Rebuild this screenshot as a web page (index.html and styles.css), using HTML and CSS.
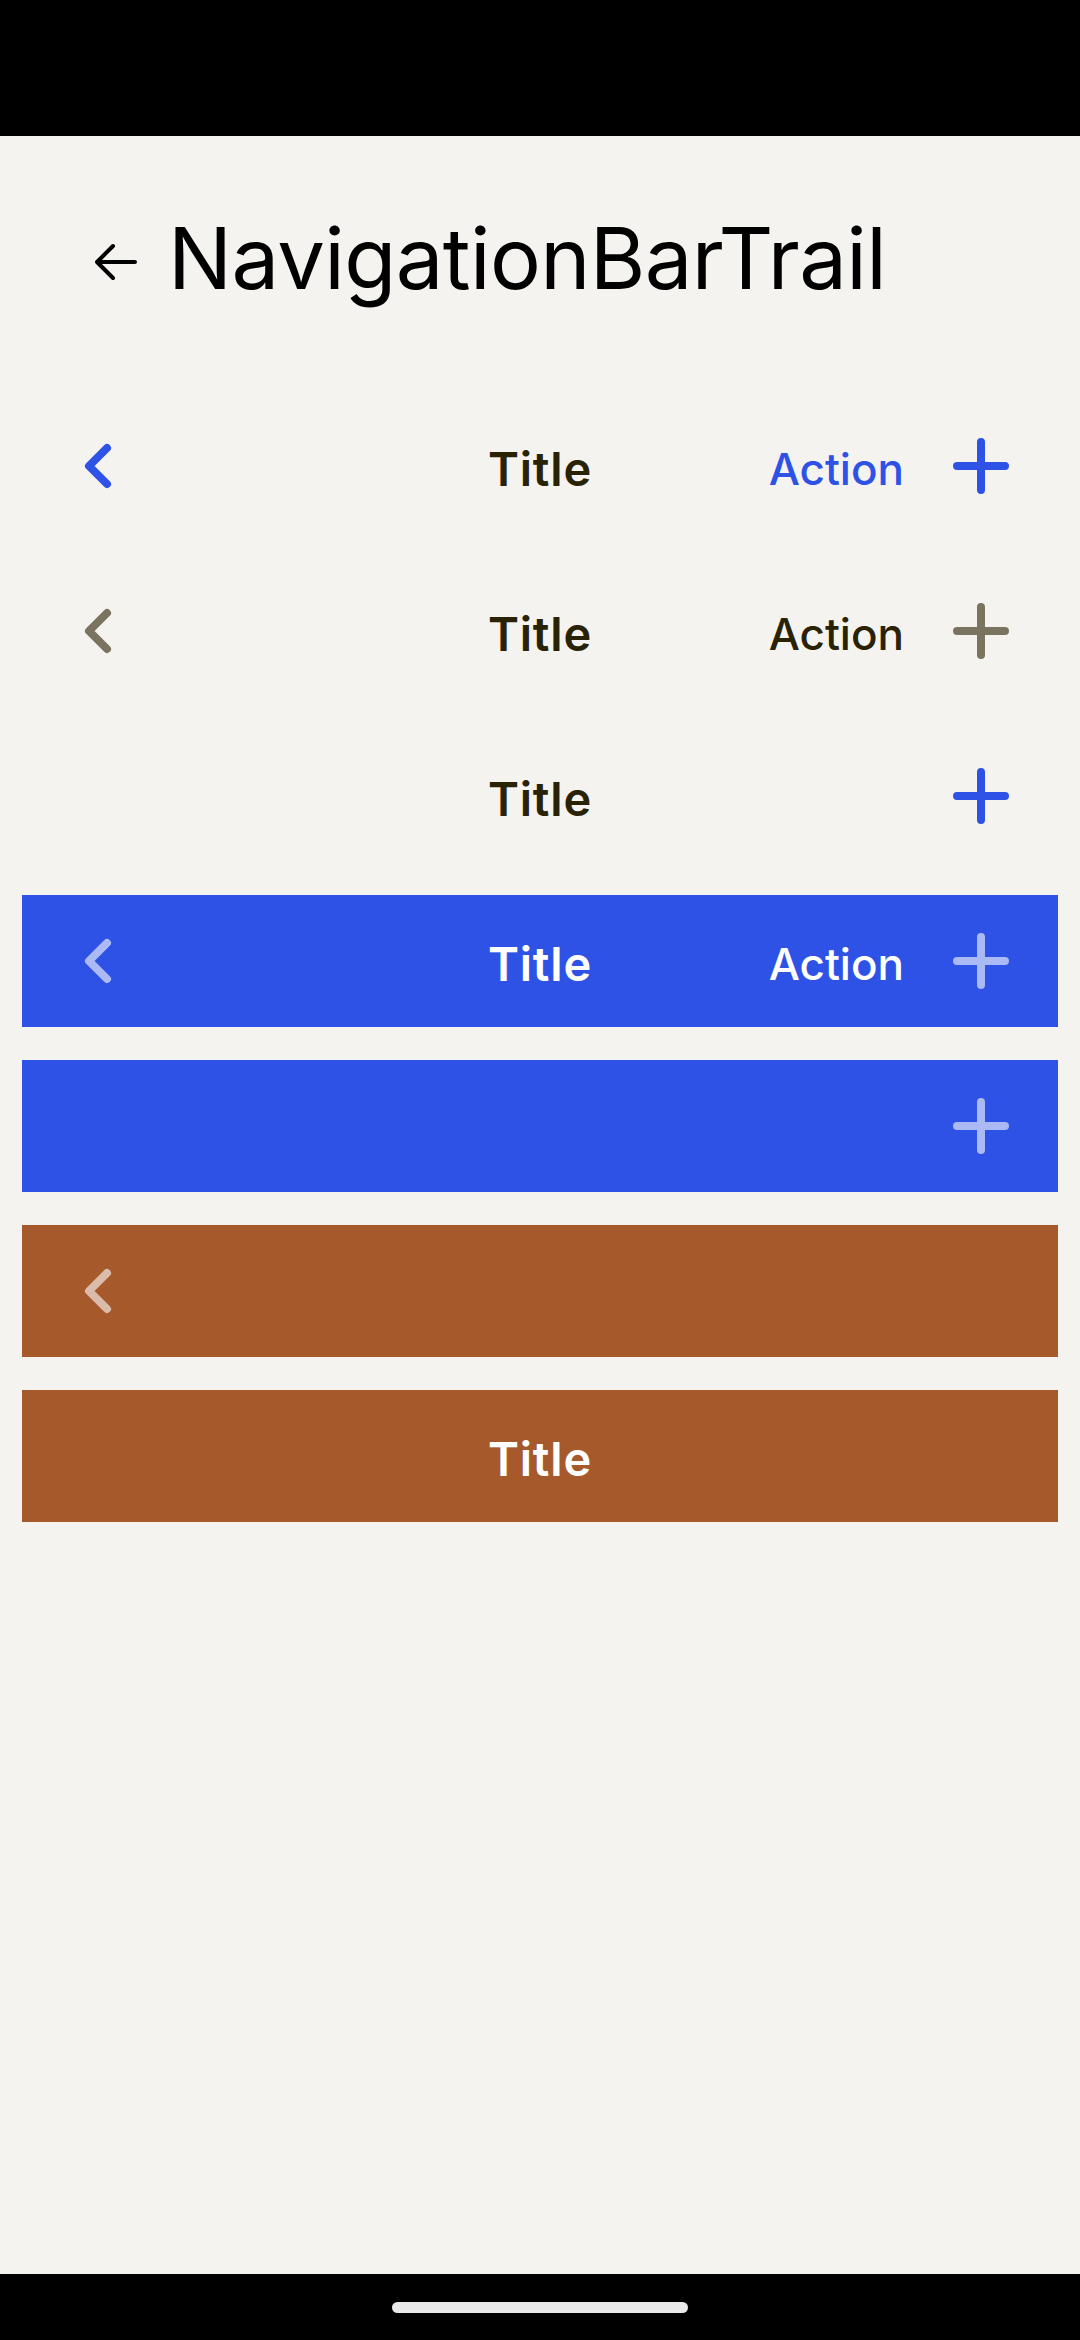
FILE: index.html
```html
<!DOCTYPE html>
<html lang="en">
<head>
<meta charset="utf-8">
<title>NavigationBarTrail</title>
<link rel="stylesheet" href="styles.css">
</head>
<body>
<div class="screen">
  <div class="status-bar"></div>
  <main class="content">
    <header class="page-header">
      <svg class="back-arrow" viewBox="0 0 42 42" width="42" height="42">
        <path d="M18 5 L2 21 L18 37 M2 21 L40 21" fill="none" stroke="#000" stroke-width="4" stroke-linecap="round" stroke-linejoin="round"/>
      </svg>
      <h1 class="page-title">NavigationBarTrail</h1>
    </header>

    <section class="bars">
      <div class="navbar theme-default">
        <div class="nav-start">
          <svg class="chevron" viewBox="0 0 56 56" width="56" height="56"><path d="M35 10 L17 28 L35 46"/></svg>
        </div>
        <div class="nav-title">Title</div>
        <div class="nav-end">
          <span class="nav-action">Action</span>
          <svg class="plus" viewBox="0 0 56 56" width="56" height="56"><path d="M4 28 L52 28 M28 4 L28 52"/></svg>
        </div>
      </div>

      <div class="navbar theme-neutral">
        <div class="nav-start">
          <svg class="chevron" viewBox="0 0 56 56" width="56" height="56"><path d="M35 10 L17 28 L35 46"/></svg>
        </div>
        <div class="nav-title">Title</div>
        <div class="nav-end">
          <span class="nav-action">Action</span>
          <svg class="plus" viewBox="0 0 56 56" width="56" height="56"><path d="M4 28 L52 28 M28 4 L28 52"/></svg>
        </div>
      </div>

      <div class="navbar theme-default">
        <div class="nav-start"></div>
        <div class="nav-title">Title</div>
        <div class="nav-end">
          <svg class="plus" viewBox="0 0 56 56" width="56" height="56"><path d="M4 28 L52 28 M28 4 L28 52"/></svg>
        </div>
      </div>

      <div class="navbar theme-blue">
        <div class="nav-start">
          <svg class="chevron" viewBox="0 0 56 56" width="56" height="56"><path d="M35 10 L17 28 L35 46"/></svg>
        </div>
        <div class="nav-title">Title</div>
        <div class="nav-end">
          <span class="nav-action">Action</span>
          <svg class="plus" viewBox="0 0 56 56" width="56" height="56"><path d="M4 28 L52 28 M28 4 L28 52"/></svg>
        </div>
      </div>

      <div class="navbar theme-blue">
        <div class="nav-start"></div>
        <div class="nav-title"></div>
        <div class="nav-end">
          <svg class="plus" viewBox="0 0 56 56" width="56" height="56"><path d="M4 28 L52 28 M28 4 L28 52"/></svg>
        </div>
      </div>

      <div class="navbar theme-brown">
        <div class="nav-start">
          <svg class="chevron" viewBox="0 0 56 56" width="56" height="56"><path d="M35 10 L17 28 L35 46"/></svg>
        </div>
        <div class="nav-title"></div>
        <div class="nav-end"></div>
      </div>

      <div class="navbar theme-brown">
        <div class="nav-start"></div>
        <div class="nav-title">Title</div>
        <div class="nav-end"></div>
      </div>
    </section>
  </main>
  <div class="nav-bar-bottom">
    <div class="home-pill"></div>
  </div>
</div>
</body>
</html>
```

FILE: styles.css
```css
* {
  box-sizing: border-box;
}

html, body {
  margin: 0;
  padding: 0;
}

body {
  background: #f4f3ef;
  font-family: Inter, "Liberation Sans", sans-serif;
}

.screen {
  width: 1080px;
  height: 2340px;
  display: flex;
  flex-direction: column;
  background: #f4f3ef;
}

.status-bar {
  height: 136px;
  background: #000;
  flex: none;
}

.content {
  flex: 1;
}

.page-header {
  display: flex;
  align-items: center;
  padding: 80px 0 0 95px;
  gap: 31px;
  margin-bottom: 99px;
}

.back-arrow {
  flex: none;
  margin-top: 6px;
}

.page-title {
  margin: 0;
  font-size: 85px;
  line-height: 85px;
  font-weight: 400;
  color: #000;
  letter-spacing: -0.65px;
}

.bars {
  display: flex;
  flex-direction: column;
  gap: 33px;
  padding: 0 22px;
}

.navbar {
  height: 132px;
  display: grid;
  grid-template-columns: 1fr auto 1fr;
  align-items: center;
  padding: 0 50px;
}

.nav-start {
  display: flex;
  align-items: center;
  justify-content: flex-start;
}

.nav-end {
  display: flex;
  align-items: center;
  justify-content: flex-end;
  gap: 49px;
}

.nav-title {
  font-size: 47px;
  font-weight: 600;
  padding-top: 4px;
  letter-spacing: 0.8px;
}

.nav-action {
  font-size: 44px;
  font-weight: 500;
  padding-top: 6px;
}

.chevron path,
.plus path {
  fill: none;
  stroke-width: 8;
  stroke-linecap: round;
  stroke-linejoin: round;
}

.plus {
  margin-right: -1px;
}

/* themes */
.theme-default .nav-title { color: #2a2205; }
.theme-default .nav-action { color: #2e52e6; }
.theme-default .chevron path,
.theme-default .plus path { stroke: #2e52e6; }

.theme-neutral .nav-title,
.theme-neutral .nav-action { color: #2a2205; }
.theme-neutral .chevron path,
.theme-neutral .plus path { stroke: #7a7360; }

.theme-blue { background: #2e52e6; }
.theme-blue .nav-title,
.theme-blue .nav-action { color: #fff; }
.theme-blue .chevron path,
.theme-blue .plus path { stroke: rgba(255, 255, 255, 0.6); }

.theme-brown { background: #a6592b; }
.theme-brown .nav-title,
.theme-brown .nav-action { color: #fff; }
.theme-brown .chevron path,
.theme-brown .plus path { stroke: rgba(255, 255, 255, 0.6); }

.nav-bar-bottom {
  height: 66px;
  background: #000;
  flex: none;
  display: flex;
  justify-content: center;
  padding-top: 28px;
}

.home-pill {
  width: 296px;
  height: 11px;
  border-radius: 6px;
  background: #eaeaea;
}
```
